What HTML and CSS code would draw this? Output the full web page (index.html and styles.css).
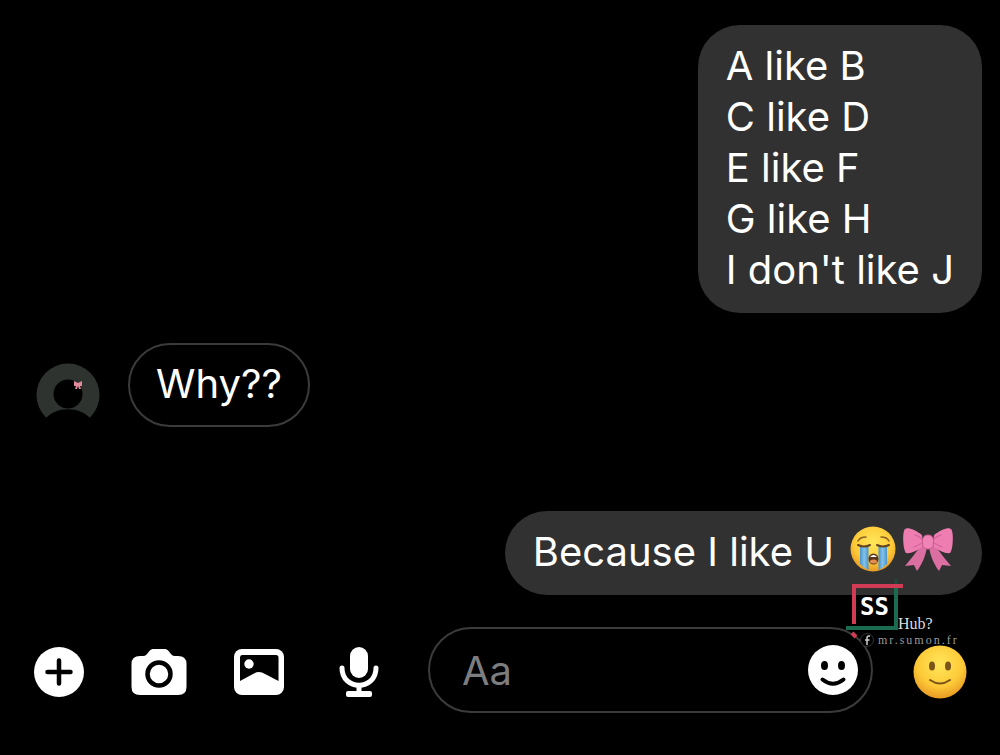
FILE: index.html
```html
<!DOCTYPE html>
<html lang="en">
  <head>
    <meta charset="UTF-8" />
    <meta name="viewport" content="width=device-width, initial-scale=1.0" />
    <title>Chat</title>
    <link rel="stylesheet" href="styles.css">
  </head>
  <body>
    <main class="chat">
      <div class="message sent">
        <p class="bubble">A like B<br>C like D<br>E like F<br>G like H<br>I don't like J</p>
      </div>

      <div class="message received">
        <svg class="avatar" viewBox="0 0 64 64" aria-hidden="true">
          <circle cx="32" cy="32" r="31.5" fill="#2f332f" />
          <circle cx="32" cy="31" r="14.5" fill="#000" />
          <path d="M0 64 L9 56 C20 43 44 43 55 56 L64 64Z" fill="#000" />
          <path d="M38 18 L42 20 L46 18 V23 L44 23 L45 26 H43 L42 23 L41 26 H39 L40 23 H38Z" fill="#e08c9c" />
        </svg>
        <p class="bubble">Why??</p>
      </div>

      <div class="message sent">
        <p class="bubble with-emoji">
          <span>Because I like U</span>
          <svg class="emoji" width="46" height="46" viewBox="0 0 46 46" role="img" aria-label="Crying face">
            <defs>
              <radialGradient id="face" cx="50%" cy="35%" r="65%">
                <stop offset="0" stop-color="#ffe75a" />
                <stop offset="0.65" stop-color="#fdc937" />
                <stop offset="1" stop-color="#e79a24" />
              </radialGradient>
              <linearGradient id="tear" x1="0" y1="0" x2="1" y2="0">
                <stop offset="0" stop-color="#4b93cb" />
                <stop offset="0.5" stop-color="#82c3ea" />
                <stop offset="1" stop-color="#4b93cb" />
              </linearGradient>
            </defs>
            <circle cx="23" cy="23" r="22.5" fill="url(#face)" />
            <path d="M10 20 H18.500 V44 Q14 42 10 38Z" fill="url(#tear)" />
            <path d="M28.500 20 H37 V38 Q33 42 28.500 44Z" fill="url(#tear)" />
            <path d="M8 19 Q14 22 20 19 M27 19 Q33 22 39 19" fill="none" stroke="#64441c" stroke-width="2" stroke-linecap="round" />
            <path d="M8 15 Q10 11 16 11 M31 11 Q37 11 39 15" fill="none" stroke="#8a6127" stroke-width="1.500" stroke-linecap="round" />
            <ellipse cx="23.500" cy="33" rx="5" ry="5.500" fill="#5b341d" />
            <path d="M20 31 Q23.500 27 27 31Z" fill="#fff" />
            <ellipse cx="23.500" cy="35.500" rx="3.500" ry="2" fill="#e58d4e" />
          </svg>
          <svg class="emoji" width="52" height="46" viewBox="0 0 52 46" role="img" aria-label="Pink bow">
            <path d="M19 20 C14 26 10 32 3 40 L12 39 L15 45 C21 37 24 28 25 21Z" fill="#dc6fa2" />
            <path d="M33 20 C38 26 42 32 49 40 L40 39 L37 45 C31 37 28 28 27 21Z" fill="#dc6fa2" />
            <path d="M20 9 C13 4 6 1 3 3 C0 6 1 24 4 27 C8 28 15 25 21 20Z" fill="#ee7eb2" />
            <path d="M32 9 C39 4 46 1 49 3 C52 6 51 24 48 27 C44 28 37 25 31 20Z" fill="#ee7eb2" />
            <path d="M13 9 Q17 10 20 13 M12 21 Q17 19 20 17 M39 9 Q35 10 32 13 M40 21 Q35 19 32 17" fill="none" stroke="#d668a0" stroke-width="1.500" stroke-linecap="round" />
            <rect x="20.500" y="9" width="11" height="14" rx="5" fill="#f084b6" stroke="#c95a8c" />
          </svg>
        </p>
      </div>
    </main>

    <form class="composer">
      <div class="tools">
        <button type="button" class="tool" aria-label="More">
          <svg width="50" height="50" viewBox="0 0 50 50">
            <circle cx="25" cy="25" r="25" fill="#fff" />
            <path d="M25 13.500 V36.500 M13.500 25 H36.500" stroke="#000" stroke-width="4.500" stroke-linecap="round" />
          </svg>
        </button>
        <button type="button" class="tool" aria-label="Camera">
          <svg width="56" height="50" viewBox="0 0 56 50">
            <path d="M9 9 H12 C15 9 16 7 18 4.500 C19.500 2.500 21 2 23 2 H33 C35 2 36.500 2.500 38 4.500 C40 7 41 9 44 9 H47 Q55.500 9 55.500 17 V40 Q55.500 48 47 48 H9 Q.500 48 .500 40 V17 Q.500 9 9 9Z" fill="#fff" />
            <circle cx="28" cy="27" r="11.500" fill="none" stroke="#000" stroke-width="4.500" />
          </svg>
        </button>
        <button type="button" class="tool" aria-label="Photos">
          <svg width="50" height="50" viewBox="0 0 50 50">
            <rect x="0" y="2" width="50" height="46" rx="8" fill="#fff" />
            <path d="M8 8 H42 Q44.500 8 44.500 10.500 V34 L31 27 Q25 23 19 27 L6 34 V10.500 Q6 8 8 8Z" fill="#000" />
            <circle cx="15" cy="17" r="4.700" fill="#fff" />
          </svg>
        </button>
        <button type="button" class="tool" aria-label="Voice message">
          <svg width="56" height="50" viewBox="0 0 56 50">
            <rect x="19" y="0" width="18" height="31" rx="9" fill="#fff" />
            <path d="M11 21 C11 44 45 44 45 21" fill="none" stroke="#fff" stroke-width="5" stroke-linecap="round" />
            <path d="M28 38 V46" stroke="#fff" stroke-width="5" />
            <rect x="15" y="44" width="26" height="6" rx="2" fill="#fff" />
          </svg>
        </button>
      </div>

      <div class="field">
        <input type="text" class="field-input" placeholder="Aa" aria-label="Message">
        <button type="button" class="tool" aria-label="Stickers">
          <svg width="50" height="50" viewBox="0 0 50 50">
            <circle cx="25" cy="25" r="25" fill="#fff" />
            <ellipse cx="16.500" cy="20.500" rx="3.500" ry="4.500" fill="#000" />
            <ellipse cx="33.500" cy="20.500" rx="3.500" ry="4.500" fill="#000" />
            <path d="M14.500 34.500 Q25 43 35.500 34.500" fill="none" stroke="#000" stroke-width="4" stroke-linecap="round" />
          </svg>
        </button>
      </div>

      <button type="button" class="tool quick" aria-label="Send smile">
        <svg width="54" height="54" viewBox="0 0 54 54">
          <circle cx="27" cy="27" r="26.500" fill="url(#face)" />
          <ellipse cx="19" cy="21" rx="3" ry="4.500" fill="#7a551a" />
          <ellipse cx="35" cy="21" rx="3" ry="4.500" fill="#7a551a" />
          <path d="M17 35 Q27 42 37 35" fill="none" stroke="#7a551a" stroke-width="2" stroke-linecap="round" />
        </svg>
      </button>

      <!-- page mark, sits over the last bubble and the field -->
      <div class="mark">
        <div class="mark-top">
          <div class="mark-logo">
            <svg width="58" height="60" viewBox="0 0 58 60" aria-hidden="true">
              <path d="M8 45 V7 H57" fill="none" stroke="#d23b55" stroke-width="4" />
              <path d="M50 9 V49 H0" fill="none" stroke="#1a6b50" stroke-width="4" />
              <path d="M50 0 V5" stroke="#1d4a3b" stroke-width="3" />
              <path d="M6 54 L10 58" stroke="#d23b55" stroke-width="4" />
            </svg>
            <span class="mark-initials">SS</span>
          </div>
          <span class="mark-name">Hub?</span>
        </div>
        <div class="mark-page">
          <svg width="14" height="14" viewBox="0 0 14 14" aria-hidden="true">
            <circle cx="7" cy="7" r="6.500" fill="#000" stroke="#333" />
            <path d="M10 3 H9 Q7 3 7 5 V12 M5 7 H9.500" fill="none" stroke="#ccc" stroke-width="1.500" />
          </svg>
          <span>mr.sumon.fr</span>
        </div>
      </div>
    </form>
  </body>
</html>
```
FILE: styles.css
```css
* {
  box-sizing: border-box;
}

body {
  margin: 0;
  min-height: 100vh;
  display: flex;
  flex-direction: column;
  background-color: #000;
  color: #fff;
  font-family: Inter, "Liberation Sans", Arial, sans-serif;
  font-size: 40px;
  line-height: 51px;
}

.chat {
  flex: 1;
  display: flex;
  flex-direction: column;
  padding: 25px 18px 0 36px;
}

.message {
  display: flex;
}

.sent {
  justify-content: flex-end;
}

.received {
  align-items: flex-end;
  gap: 28px;
  margin: 30px 0 84px;
}

.bubble {
  margin: 0;
  padding: 15px 28px 18px;
  border-radius: 42px;
  background-color: #313131;
}

.received .bubble {
  padding: 13px 26px 16px;
  border: 2px solid #3a3b3a;
  background-color: #000;
}

.with-emoji {
  display: flex;
  gap: 6px;
}

.with-emoji span {
  margin-right: 10px;
}

.avatar {
  width: 64px;
  height: 64px;
}

.composer {
  position: relative;
  display: flex;
  align-items: center;
  padding: 32px 33px 42px 34px;
}

.tools {
  display: flex;
  gap: 47px;
  margin-right: 41px;
  padding-top: 4px;
}

.tool {
  flex: none;
  display: block;
  padding: 0;
  border: 0;
  background: none;
  cursor: pointer;
}

.tool svg {
  display: block;
}

.quick {
  padding-top: 4px;
}

.field {
  flex: 1;
  min-width: 0;
  height: 86px;
  display: flex;
  align-items: center;
  margin-right: 40px;
  padding: 0 13px 0 32px;
  border: 2px solid #3a3c3b;
  border-radius: 43px;
}

.field-input {
  flex: 1;
  min-width: 0;
  padding: 0;
  border: 0;
  outline: none;
  background: none;
  color: #fff;
  font: inherit;
}

.field-input::placeholder {
  color: #7d7d7f;
  opacity: 1;
}

.mark {
  position: absolute;
  top: -16px;
  right: 38px;
  width: 116px;
  font-family: "Liberation Serif", "Times New Roman", serif;
  color: #ddd;
  pointer-events: none;
}

.mark-top {
  display: flex;
  align-items: flex-end;
  height: 54px;
}

.mark-logo {
  position: relative;
  width: 52px;
  height: 54px;
}

.mark-initials {
  position: absolute;
  top: 14px;
  left: 14px;
  color: #fff;
  font-family: "DejaVu Sans Mono", monospace;
  font-size: 24px;
  font-weight: bold;
  line-height: 28px;
}

.mark-name {
  font-size: 16px;
  line-height: 18px;
}

.mark-page {
  display: flex;
  align-items: center;
  gap: 4px;
  padding-left: 14px;
  color: #999;
  font-size: 12px;
  line-height: 14px;
  letter-spacing: 2px;
}
```
